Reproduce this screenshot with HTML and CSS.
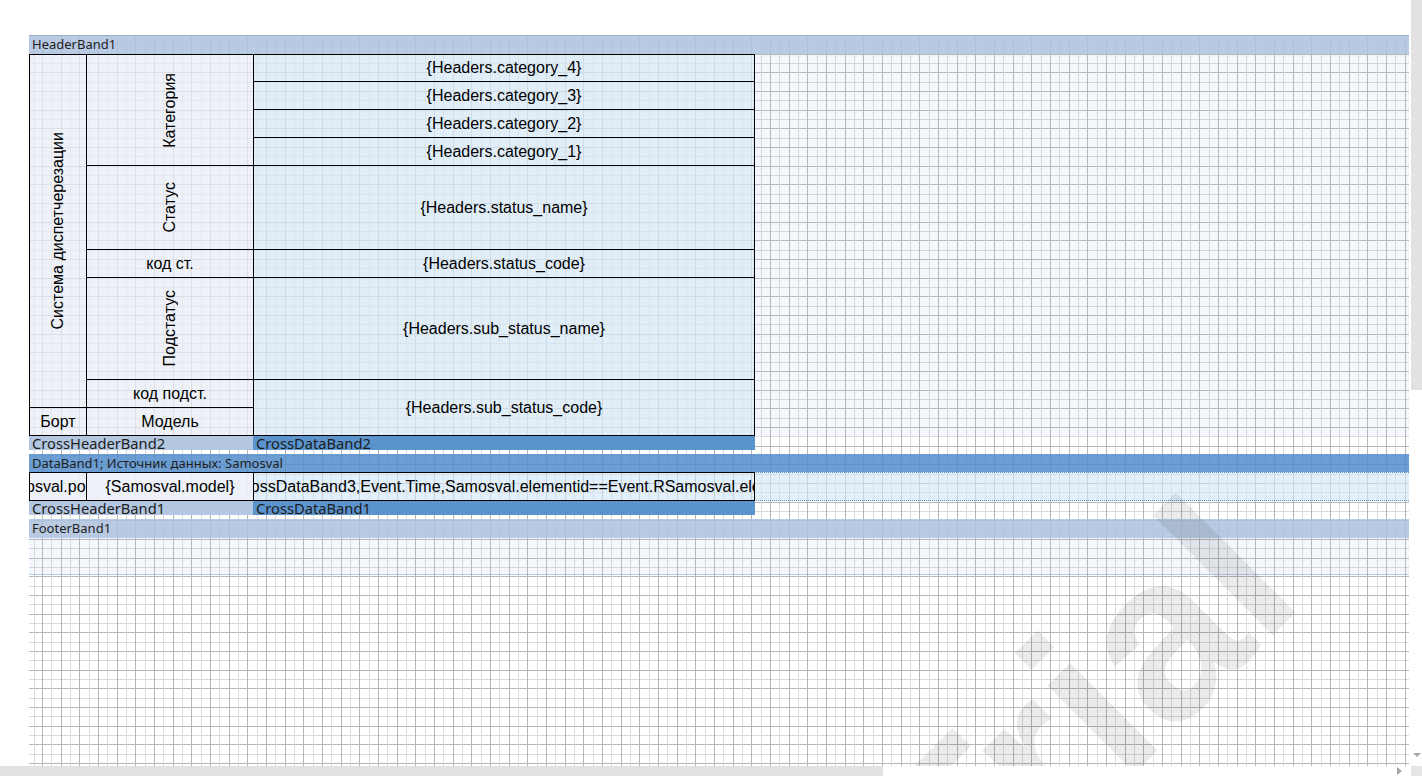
FILE: index.html
```html
<!DOCTYPE html>
<html lang="ru">
<head>
  <meta charset="UTF-8">
  <title>Report Designer</title>
  <link rel="stylesheet" href="styles.css">
</head>
<body>
  <div class="designer">
    <div class="viewport">
      <div class="page">
        <div class="band-title top">HeaderBand1</div>
        <div class="band-area header-area">
          <div class="hdr-table">
            <div class="cell span-8"><span class="rot">Система диспетчерезации</span></div>
            <div class="cell span-4"><span class="rot">Категория</span></div>
            <div class="cell val">{Headers.category_4}</div>
            <div class="cell val">{Headers.category_3}</div>
            <div class="cell val">{Headers.category_2}</div>
            <div class="cell val">{Headers.category_1}</div>
            <div class="cell"><span class="rot">Статус</span></div>
            <div class="cell val">{Headers.status_name}</div>
            <div class="cell">код ст.</div>
            <div class="cell val">{Headers.status_code}</div>
            <div class="cell"><span class="rot">Подстатус</span></div>
            <div class="cell val">{Headers.sub_status_name}</div>
            <div class="cell">код подст.</div>
            <div class="cell val span-2">{Headers.sub_status_code}</div>
            <div class="cell">Борт</div>
            <div class="cell">Модель</div>
          </div>
        </div>

        <div class="cross-row">
          <div class="cross-head">CrossHeaderBand2</div>
          <div class="cross-data">CrossDataBand2</div>
        </div>
        <div class="gap"></div>

        <div class="band-title active">DataBand1; Источник данных: Samosval</div>
        <div class="data-area">
          <div class="data-row">
            <div class="dcell c1">{Samosval.position}</div>
            <div class="dcell c2">{Samosval.model}</div>
            <div class="dcell c3">{CrossDataBand3,Event.Time,Samosval.elementid==Event.RSamosval.elem}</div>
          </div>
        </div>

        <div class="cross-row">
          <div class="cross-head">CrossHeaderBand1</div>
          <div class="cross-data">CrossDataBand1</div>
        </div>
        <div class="gap"></div>

        <div class="band-title">FooterBand1</div>
        <div class="band-area footer-area"></div>
      </div>

      <!-- trial watermark drawn over the page -->
      <svg class="watermark" width="1411" height="766">
        <text x="967" y="941" transform="rotate(-45 967 941)">Trial</text>
      </svg>
    </div>

    <div class="vscroll">
      <div class="vthumb"></div>
      <span class="arrow-down"></span>
    </div>
    <div class="hscroll">
      <div class="hthumb"></div>
      <span class="arrow-right"></span>
    </div>
    <div class="corner"></div>
  </div>
</body>
</html>
```

FILE: styles.css
```css
* {
  box-sizing: border-box;
}

html, body {
  margin: 0;
  padding: 0;
  background: #fff;
}

body {
  width: 1422px;
  height: 776px;
  overflow: hidden;
  font-family: "Liberation Sans", Arial, sans-serif;
}

.designer {
  display: grid;
  grid-template-columns: 1411px 11px;
  grid-template-rows: 766px 10px;
}

.viewport {
  position: relative;
  overflow: hidden;
  padding: 35px 0 0 29px;
}

/* page with the 0.25cm design grid, every second line darker */
.page {
  width: 1380px;
  height: 731px;
  background-color: #fff;
  background-image:
    repeating-linear-gradient(to right,
      #b6b6b6 0 1px, transparent 1px 9px,
      #dadada 9px 10px, transparent 10px 19px,
      #b6b6b6 19px 20px, transparent 20px 28px,
      #dadada 28px 29px, transparent 29px 37px,
      #b6b6b6 37px 38px, transparent 38px 47px,
      #dadada 47px 48px, transparent 48px 56px),
    repeating-linear-gradient(to bottom,
      #b6b6b6 0 1px, transparent 1px 9px,
      #dadada 9px 10px, transparent 10px 19px,
      #b6b6b6 19px 20px, transparent 20px 28px,
      #dadada 28px 29px, transparent 29px 37px,
      #b6b6b6 37px 38px, transparent 38px 47px,
      #dadada 47px 48px, transparent 48px 56px);
  background-position: 13px 0, 0 0;
}

.band-title {
  height: 19px;
  padding-left: 3px;
  font: 13px/19px "Noto Sans", "Open Sans", sans-serif;
  color: #1e1e1e;
  background: rgba(173, 193, 222, 0.85);
  white-space: nowrap;
}

.band-title.top {
  border-top: 1px solid rgba(140, 160, 190, 0.6);
  line-height: 17px;
}

.band-title.active {
  height: 18px;
  line-height: 18px;
  background: rgba(82, 141, 203, 0.85);
}

.band-area {
  background: rgba(170, 195, 230, 0.13);
}

.header-area {
  height: 382px;
}

.footer-area {
  height: 37px;
  border-bottom: 1px solid rgba(120, 160, 210, 0.5);
}

.hdr-table {
  display: grid;
  width: 726px;
  grid-template-columns: 57px 167px 501px;
  grid-template-rows: 27px 28px 28px 28px 84px 28px 102px 28px 28px;
  border-left: 1px solid #000;
  border-top: 1px solid #000;
}

.cell {
  display: flex;
  align-items: center;
  justify-content: center;
  overflow: hidden;
  white-space: nowrap;
  font-size: 16px;
  color: #000;
  border-right: 1px solid #000;
  border-bottom: 1px solid #000;
  background: rgba(235, 240, 246, 0.7);
}

.cell.val {
  background: rgba(217, 233, 246, 0.7);
}

.span-8 {
  grid-row: span 8;
}

.span-4 {
  grid-row: span 4;
}

.span-2 {
  grid-row: span 2;
}

.rot {
  writing-mode: vertical-rl;
  transform: rotate(180deg);
}

.cross-row {
  display: flex;
  height: 14px;
  font: 14.7px/14px "Noto Sans", "Open Sans", sans-serif;
  color: #1c1c1c;
  white-space: nowrap;
}

.cross-head {
  width: 224px;
  padding-left: 3px;
  background: #b4c7e1;
}

.cross-data {
  width: 502px;
  padding-left: 3px;
  background: #5b93cc;
}

.gap {
  height: 4px;
}

.data-area {
  height: 29px;
  background: rgba(208, 230, 247, 0.6);
  border-top: 1px dotted #5b93cc;
  border-bottom: 1px dotted #5b93cc;
}

.data-row {
  display: flex;
  width: 726px;
  height: 29px;
  margin: -1px 0;
  border: 1px solid #000;
  border-right: none;
}

.dcell {
  display: flex;
  align-items: center;
  justify-content: center;
  overflow: hidden;
  white-space: nowrap;
  font-size: 16px;
  color: #000;
  border-right: 1px solid #000;
}

.dcell.c1 {
  width: 57px;
  background: rgba(240, 243, 248, 0.8);
}

.dcell.c2 {
  width: 167px;
  background: rgba(240, 243, 248, 0.8);
}

.dcell.c3 {
  width: 501px;
}

.watermark {
  position: absolute;
  left: 0;
  top: 0;
  pointer-events: none;
}

.watermark text {
  font: bold 234px "Liberation Sans", Arial, sans-serif;
  fill: rgba(0, 0, 0, 0.08);
}

.vscroll {
  display: flex;
  flex-direction: column;
  align-items: center;
}

.vthumb {
  width: 11px;
  height: 390px;
  background: #e2e2e2;
}

.arrow-down {
  margin-top: auto;
  margin-bottom: 9px;
  border-left: 4px solid transparent;
  border-right: 4px solid transparent;
  border-top: 4px solid #a6a6a6;
}

.hscroll {
  display: flex;
  align-items: center;
}

.hthumb {
  width: 883px;
  height: 10px;
  background: #e2e2e2;
}

.arrow-right {
  margin-left: auto;
  margin-right: 9px;
  border-top: 4px solid transparent;
  border-bottom: 4px solid transparent;
  border-left: 5px solid #a6a6a6;
}

.corner {
  background: #e6e6e6;
}
```
